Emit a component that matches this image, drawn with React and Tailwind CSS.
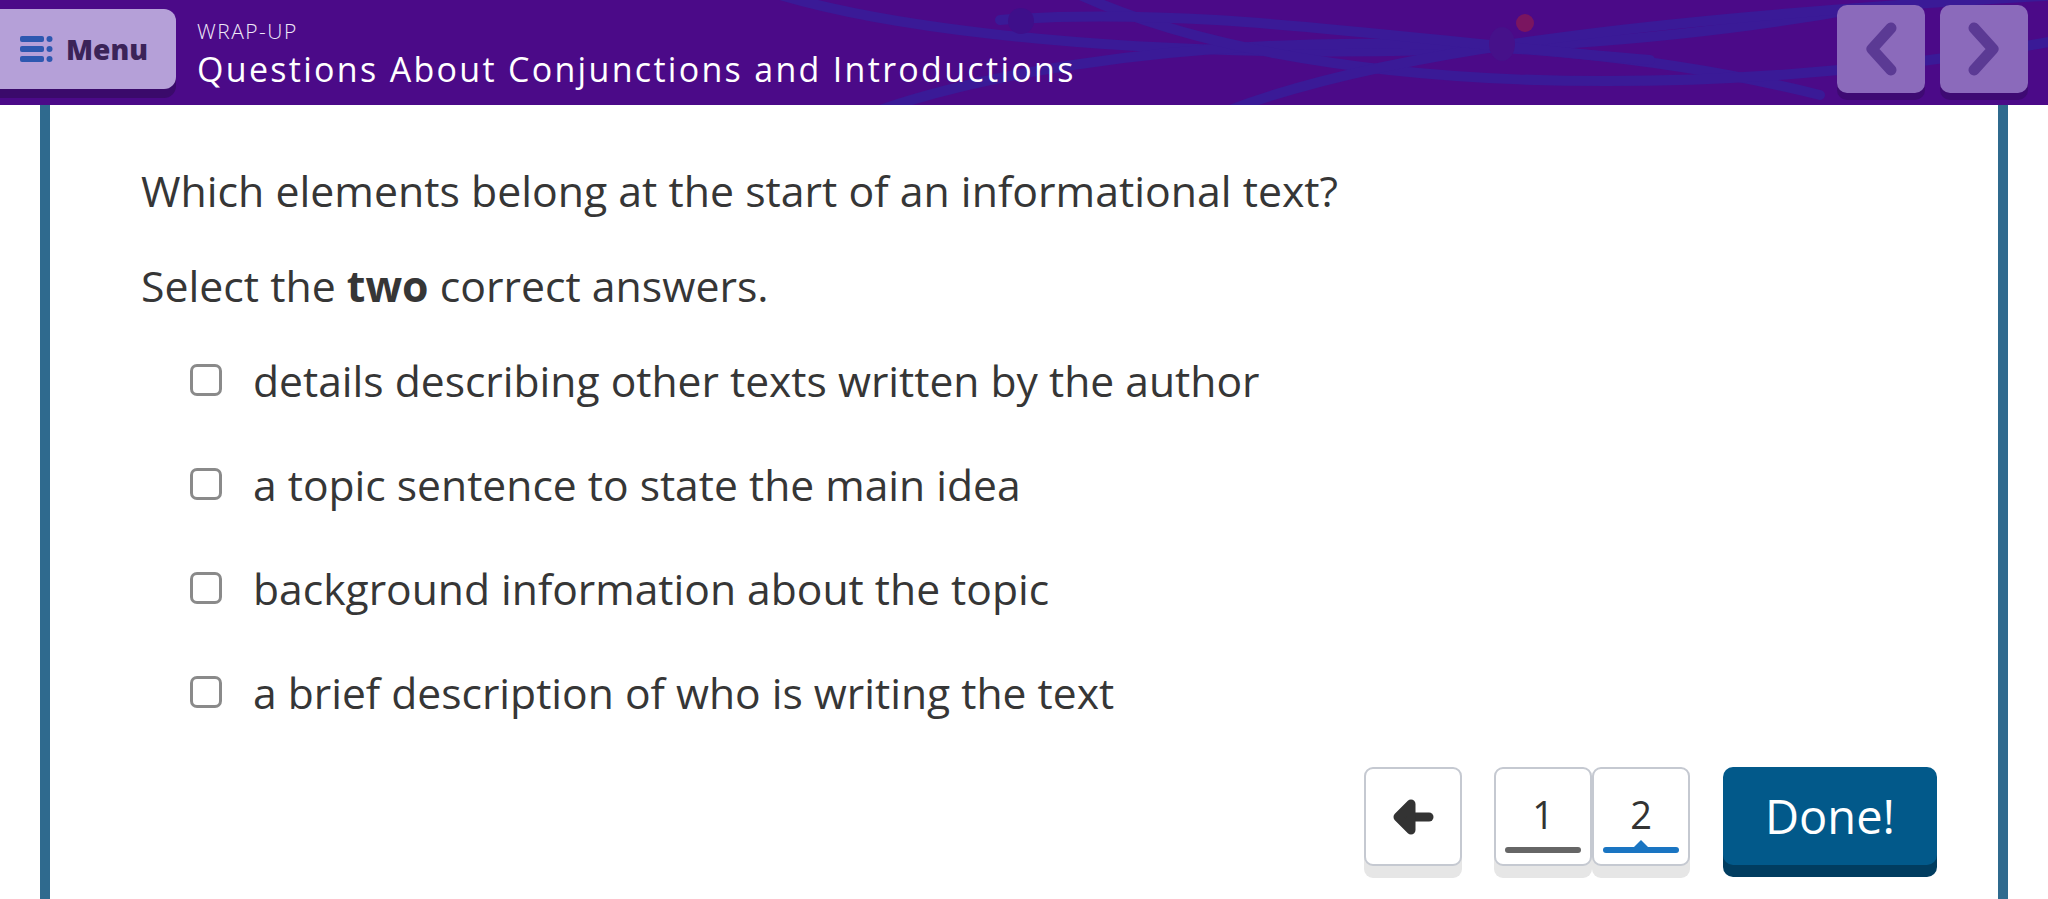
export default function App() {
  const options = [
    "details describing other texts written by the author",
    "a topic sentence to state the main idea",
    "background information about the topic",
    "a brief description of who is writing the text",
  ];
  return (
    <div className="h-[899px] w-full overflow-hidden bg-white font-['Open_Sans',sans-serif]">
      <header className="relative flex h-[105px] overflow-hidden bg-[#4b0a88]">
        <svg className="absolute inset-0 h-full w-full" viewBox="0 0 2048 105" preserveAspectRatio="none" fill="none">
          <g stroke="#3a1a97" strokeWidth="10" strokeLinecap="round">
            <path d="M780 -5 C1000 60 1500 75 1860 8" />
            <path d="M880 110 C1100 35 1500 15 1820 95" />
            <path d="M1080 -5 C1300 95 1700 105 2060 40" />
            <path d="M1230 110 C1400 45 1700 15 2060 -5" />
            <path d="M1000 20 C1200 5 1400 40 1650 60" />
          </g>
          <circle cx="1021" cy="21" r="13" fill="#3e0f8a" />
          <ellipse cx="1502" cy="44" rx="13" ry="17" fill="#46118a" />
          <circle cx="1525" cy="23" r="9" fill="#7a1560" />
          <circle cx="1913" cy="16" r="10" fill="#7a1560" />
        </svg>
        <div className="relative mt-[9px] flex h-[80px] w-[176px] items-center gap-[13px] rounded-r-[12px] bg-[#b5a0d8] pl-[20px] shadow-[0_9px_0_#3a0a6b]">
          <svg width="33" height="26" viewBox="0 0 33 26" fill="#2d58b0">
            <rect x="0" y="0" width="24" height="6" rx="2" />
            <rect x="0" y="10" width="24" height="6" rx="2" />
            <rect x="0" y="20" width="24" height="6" rx="2" />
            <circle cx="29.5" cy="3" r="3" />
            <circle cx="29.5" cy="13" r="3" />
            <circle cx="29.5" cy="23" r="3" />
          </svg>
          <span className="text-[28px] font-extrabold leading-none text-[#3b2358]">Menu</span>
        </div>
        <div className="relative ml-[21px] flex flex-col pt-[20px]">
          <span className="text-[21px] font-light leading-[22px] tracking-[1.5px] text-[#efe8f8]">WRAP-UP</span>
          <span className="mt-[7px] text-[34px] font-medium leading-[40px] tracking-[2.3px] text-white">
            Questions About Conjunctions and Introductions
          </span>
        </div>
        <div className="relative ml-auto mr-[20px] mt-[5px] flex gap-[15px]">
          <div className="flex h-[88px] w-[88px] items-center justify-center rounded-[10px] bg-[#8b6abb] shadow-[0_7px_0_#3e0a73]">
            <svg width="34" height="56" viewBox="0 0 34 56" fill="none" stroke="#5b3a94" strokeWidth="11" strokeLinecap="round" strokeLinejoin="round">
              <polyline points="27,7 8,28 27,49" />
            </svg>
          </div>
          <div className="flex h-[88px] w-[88px] items-center justify-center rounded-[10px] bg-[#8b6abb] shadow-[0_7px_0_#3e0a73]">
            <svg width="34" height="56" viewBox="0 0 34 56" fill="none" stroke="#5b3a94" strokeWidth="11" strokeLinecap="round" strokeLinejoin="round">
              <polyline points="7,7 26,28 7,49" />
            </svg>
          </div>
        </div>
      </header>

      <main className="mx-[40px] flex h-[794px] flex-col border-x-[10px] border-[#2f6a8e] bg-white pl-[91px] pr-[61px] pt-[61px] text-[#363636]">
        <p className="text-[42.8px] leading-[50px]">Which elements belong at the start of an informational text?</p>
        <p className="mt-[45px] text-[42.8px] leading-[50px]">
          Select the <b className="font-bold">two</b> correct answers.
        </p>
        <ul className="mt-[44px] flex flex-col gap-[54px] pl-[49px]">
          {options.map((o) => (
            <li key={o} className="flex h-[50px] items-center gap-[31px]">
              <span className="h-[32px] w-[32px] shrink-0 rounded-[7px] border-[3px] border-[#8a8a8a]" />
              <span className="text-[42.6px] leading-[50px]">{o}</span>
            </li>
          ))}
        </ul>
        <div className="mt-[50px] flex items-start justify-end">
          <div className="flex h-[99px] w-[98px] items-center justify-center rounded-[9px] border-2 border-[#c5c9d1] bg-white shadow-[0_12px_0_#e6e6e6]">
            <svg width="44" height="38" viewBox="0 0 44 38" fill="none" stroke="#333" strokeWidth="9" strokeLinecap="round" strokeLinejoin="round">
              <path d="M38 19 H12" />
              <path d="M20 6 L7 19 L20 32 Z" fill="#333" />
            </svg>
          </div>
          <div className="ml-[32px] flex">
            <div className="flex h-[99px] w-[98px] flex-col items-center rounded-[9px] border-2 border-[#c5c9d1] bg-white pt-[24px] shadow-[0_12px_0_#e6e6e6]">
              <span className="text-[38px] font-medium leading-[42px] text-[#333]">1</span>
              <span className="mt-[12px] h-[6px] w-[76px] rounded-full bg-[#666]" />
            </div>
            <div className="flex h-[99px] w-[98px] flex-col items-center rounded-[9px] border-2 border-[#c5c9d1] bg-white pt-[24px] shadow-[0_12px_0_#e6e6e6]">
              <span className="text-[38px] font-medium leading-[42px] text-[#333]">2</span>
              <span className="relative mt-[12px] h-[6px] w-[76px] rounded-full bg-[#1a75c2]">
                <span className="absolute left-1/2 top-[-7px] h-0 w-0 -translate-x-1/2 border-x-[8px] border-b-[8px] border-x-transparent border-b-[#1a75c2]" />
              </span>
            </div>
          </div>
          <div className="ml-[33px] flex h-[98px] w-[214px] items-center justify-center rounded-[10px] bg-[#02598a] shadow-[0_12px_0_#013d60]">
            <span className="text-[47px] font-medium leading-none text-white">Done!</span>
          </div>
        </div>
      </main>
    </div>
  );
}
